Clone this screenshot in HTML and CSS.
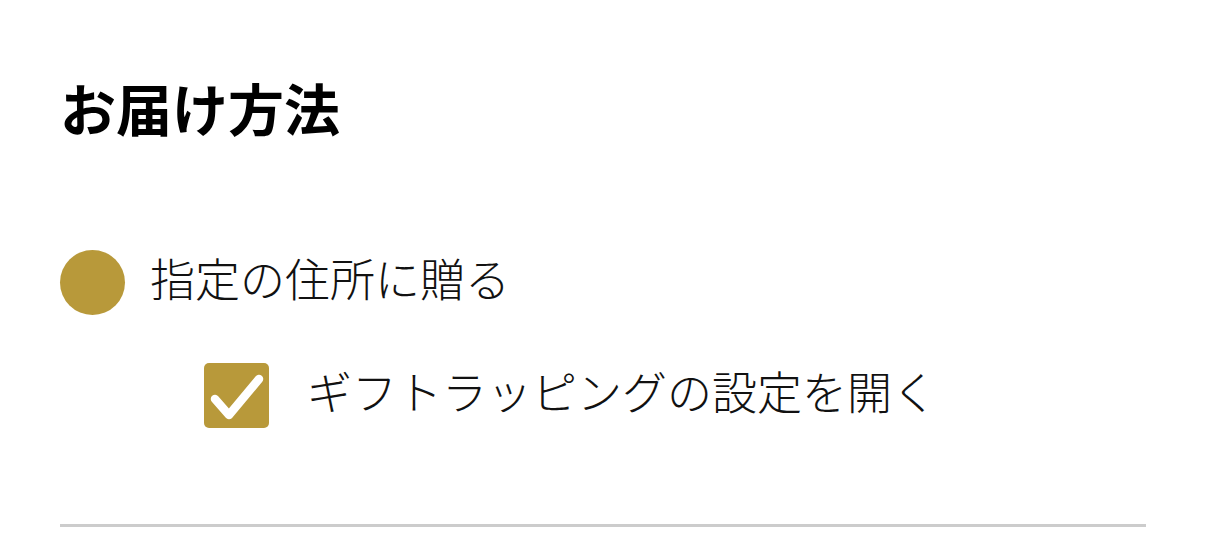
FILE: index.html
```html
<!DOCTYPE html>
<html lang="ja">
<head>
    <meta charset="UTF-8">
    <meta name="viewport" content="width=device-width, initial-scale=1.0">
    <title>お届け方法</title>
    <link rel="stylesheet" href="styles.css">
</head>
<body>
    <section class="delivery">
        <h2 class="delivery-title">お届け方法</h2>

        <div class="option-row">
            <span class="radio-dot"></span>
            <span class="option-label">指定の住所に贈る</span>
        </div>

        <div class="option-row sub-option">
            <span class="check-box">
                <svg viewBox="0 0 64 64" width="64" height="64">
                    <path d="M10 35 L24 51 L54 15" fill="none" stroke="#fff" stroke-width="8.5" stroke-linecap="round" stroke-linejoin="round"/>
                </svg>
            </span>
            <span class="option-label">ギフトラッピングの設定を開く</span>
        </div>

        <hr class="divider">
    </section>
</body>
</html>
```

FILE: styles.css
```css
body {
    margin: 0;
    background-color: #fff;
    font-family: "Noto Sans CJK JP", "Noto Sans", sans-serif;
    color: #111;
}

.delivery {
    padding: 79px 60px 0 60px;
}

.delivery-title {
    margin: 0;
    font-size: 56px;
    line-height: 56px;
    font-weight: 700;
    color: #000;
}

.option-row {
    display: flex;
    align-items: center;
    height: 65px;
    margin-top: 115px;
}

.sub-option {
    margin-top: 48px;
    padding-left: 144px;
}

.radio-dot {
    width: 65px;
    height: 65px;
    border-radius: 50%;
    background-color: #b8993a;
    flex-shrink: 0;
}

.check-box {
    width: 65px;
    height: 65px;
    border-radius: 5px;
    background-color: #b8993a;
    display: flex;
    align-items: center;
    justify-content: center;
    flex-shrink: 0;
}

.option-label {
    font-size: 45px;
    line-height: 65px;
    font-weight: 300;
    margin-left: 25px;
    margin-bottom: 10px;
    white-space: nowrap;
}

.sub-option .option-label {
    margin-left: 38px;
}

.divider {
    margin: 96px 0 0 0;
    border: none;
    height: 3px;
    background-color: #cccccc;
}
```
